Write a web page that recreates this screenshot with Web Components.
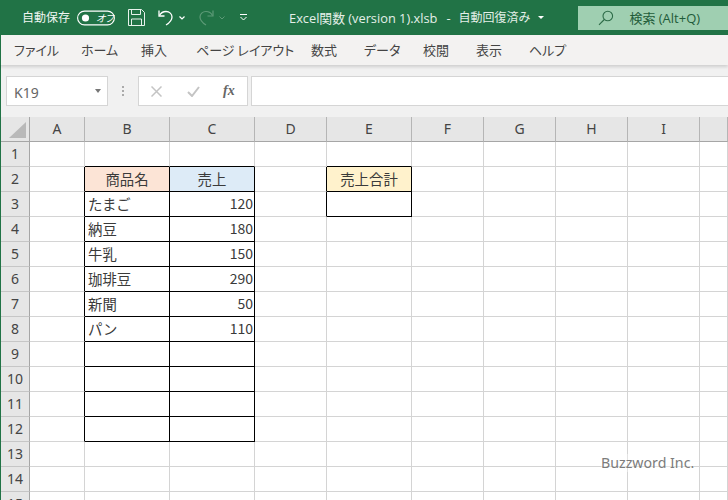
<!DOCTYPE html>
<html><head><meta charset="utf-8"><style>
html,body{margin:0;padding:0;background:#fff;overflow:hidden}
body{width:728px;height:500px;font-family:"Noto Sans CJK JP","Noto Sans",sans-serif}
</style></head><body>
<xl-app>
<xl-titlebar></xl-titlebar>
<xl-tabs></xl-tabs>
<xl-formula></xl-formula>
<xl-sheet></xl-sheet>
</xl-app>
<script>
const FONT='"Open Sans","Noto Sans CJK JP",sans-serif';
class App extends HTMLElement{constructor(){super();this.attachShadow({mode:'open'}).innerHTML=`<style>
:host{display:flex;flex-direction:column;width:728px;height:500px;overflow:hidden;position:relative;background:#fff}
.wm{position:absolute;left:601px;top:454px;font:14.2px/18px "Noto Sans",sans-serif;color:#7c7c7c;white-space:nowrap;background:rgba(255,255,255,.35)}
</style><slot></slot><div class="wm">Buzzword Inc.</div>`}}
class Title extends HTMLElement{constructor(){super();this.attachShadow({mode:'open'}).innerHTML=`<style>
:host{display:flex;align-items:center;height:35px;flex:none;background:#217346;color:#fff;font:12px/16px ${FONT};white-space:nowrap}
.a{margin-left:22px;color:#f0f6f2}
svg{display:block;flex:none}
.title{color:#e4efe8;margin-left:42px;font-size:12.8px;display:flex;align-items:center;width:296px}
.title b{font-weight:400;font-size:12px}
.search{margin-left:auto;width:153px;height:24px;background:#9fcfb1;display:flex;align-items:center;color:#1f5c3a;font-size:13px;align-self:flex-start;margin-top:6px}
.search svg{margin-left:20px}
.search span{margin-left:15px}
.sw{margin-left:7px}.sv{margin-left:13px}.un{margin-left:13px}.c1{margin-left:5px}.re{margin-left:13px}.c2{margin-left:5px}.cu{margin-left:15px}
</style>
<span class="a">自動保存</span>
<svg class="sw" width="38" height="16" viewBox="0 0 38 16"><rect x=".6" y="1.1" width="36.800" height="13.800" rx="6.900" fill="none" stroke="#fff" stroke-width="1.100"/><circle cx="8.500" cy="8" r="3.600" fill="#fff"/><text x="19" y="12" font-size="10" font-style="italic" fill="#fff" font-family="Noto Sans CJK JP" style="font-feature-settings:'palt'">オフ</text></svg>
<svg class="sv" width="17" height="17" viewBox="0 0 17 17" fill="none" stroke="#e8f2ec" stroke-width="1"><path d="M.5.5h13l3 3v13H.5z"/><path d="M3.500.5v5h9v-5M3.500 16.500v-6.500h10v6.500"/></svg>
<svg class="un" width="16" height="17" viewBox="0 0 16 17" fill="none" stroke="#fff" stroke-width="1.300"><path d="M1 1.500V7h5.500"/><path d="M1.500 6.500C3 3.500 5.500 2.500 8 2.500c3.500 0 6 2.500 6 5.500 0 3-2 5.500-6 8"/></svg>
<svg class="c1" width="6" height="4" viewBox="0 0 6 4" fill="none" stroke="#fff" stroke-width="1.200"><path d="M.5.500 3 3 5.500.5"/></svg>
<svg class="re" width="16" height="17" viewBox="0 0 16 17" fill="none" stroke="#5d9a77" stroke-width="1.200"><path d="M15 1.500V7H9.500"/><path d="M14.500 6.500C13 3.500 10.500 2.500 8 2.500 4.500 2.500 2 5 2 8c0 3 2 5.500 6 8"/></svg>
<svg class="c2" width="6" height="4" viewBox="0 0 6 4" fill="none" stroke="#5d9a77"><path d="M.5.500 3 3 5.500.5"/></svg>
<svg class="cu" width="7" height="7" viewBox="0 0 7 7" fill="none" stroke="#fff"><path d="M0 .5h7M.5 3 3.500 6 6.500 3"/></svg>
<span class="title">Excel関数 (version 1).xlsb<span style="margin-left:9px">-</span><b style="margin-left:8px">自動回復済み</b><svg style="margin-left:7px" width="6" height="3" viewBox="0 0 6 3"><path d="M0 0h6L3 3z" fill="#fff"/></svg></span>
<div class="search"><svg width="16" height="16" viewBox="0 0 16 16" fill="none" stroke="#2c6b47" stroke-width="1.100"><circle cx="9.800" cy="6" r="4.800"/><path d="M6.300 9.500 1 14.800"/></svg><span>検索 (Alt+Q)</span></div>`}}
class Tabs extends HTMLElement{constructor(){super();const t=[['ファイル',80],['ホーム',60],['挿入',55],['ページ レイアウト',115],['数式',53],['データ',59],['校閲',53],['表示',53],['ヘルプ',60]];
this.attachShadow({mode:'open'}).innerHTML=`<style>
:host{display:flex;align-items:center;height:30px;flex:none;background:#f3f2f1;color:#444;font:13px/16px "Noto Sans CJK JP",sans-serif;font-feature-settings:"palt";white-space:nowrap;box-shadow:0 2px 3px rgba(0,0,0,.14);position:relative;z-index:1;border-left:1px solid #217346;box-sizing:border-box;padding-left:13px}
span{display:block;flex:none}
</style>`+t.map(([s,w])=>`<span style="width:${w-(s=='ファイル'?13:0)}px">${s}</span>`).join('')}}
class Formula extends HTMLElement{constructor(){super();this.attachShadow({mode:'open'}).innerHTML=`<style>
:host{display:flex;height:52px;flex:none;box-sizing:border-box;padding:11px 0 0 5px;background:#f1f1f1;border-left:1px solid #217346}
.box{height:30px;box-sizing:border-box;background:#fff;border:1px solid #d5d5d5;display:flex;align-items:center}
.name{width:102px;padding-left:7px;font:14px "Noto Sans",sans-serif;color:#666;justify-content:space-between;padding-right:6px}
.name span:first-child{padding-top:2px}
.tri{width:0;height:0;border:3.500px solid transparent;border-top:4px solid #777;border-bottom:0}
.dots{width:30px;display:flex;flex-direction:column;align-items:center;justify-content:center;gap:2px;height:30px}
.dots i{width:2px;height:2px;background:#aaa}
.btns{width:110px;justify-content:flex-start}
.btns svg{display:block}
.fx{font:italic bold 14px "Liberation Serif",serif;color:#666;margin-left:23px}
.input{flex:1;margin-left:3px;border-right:0}
</style>
<div class="box name"><span>K19</span><span class="tri"></span></div>
<div class="dots"><i></i><i></i><i></i></div>
<div class="box btns">
<svg style="margin-left:12px" width="11" height="11" viewBox="0 0 11 11" stroke="#c4c4c4" stroke-width="1.500"><path d="M.5.500l10 10M10.500.500l-10 10"/></svg>
<svg style="margin-left:25px" width="13" height="11" viewBox="0 0 13 11" fill="none" stroke="#c4c4c4" stroke-width="2"><path d="M1 6l4 4 7-9"/></svg>
<span class="fx">fx</span></div>
<div class="box input"></div>`}}
class Sheet extends HTMLElement{constructor(){super();
const cw=[55,85,85,72,85,72,72,72,72,28];
const cols='ABCDEFGHIJ'.split('');
const data={B2:['商品名','h o'],C2:['売上','h b'],E2:['売上合計','h y'],B3:['たまご'],C3:['120','n'],B4:['納豆'],C4:['180','n'],B5:['牛乳'],C5:['150','n'],B6:['珈琲豆'],C6:['290','n'],B7:['新聞'],C7:['50','n'],B8:['パン'],C8:['110','n']};
const inT=(c,r)=>((c==1||c==2)&&r>=2&&r<=12)||(c==4&&(r==2||r==3));
let h=`<style>
:host{display:grid;flex:none;grid-template-columns:29px ${cw.map(x=>x+'px').join(' ')};grid-auto-rows:25px;grid-template-rows:25px;font:14.400px/23px "Noto Sans CJK JP",sans-serif;color:#3a3a3a;background:#fff;border-left:1px solid #217346}
.c{box-sizing:border-box;border-right:1px solid #d4d4d4;border-bottom:1px solid #d4d4d4;overflow:hidden;white-space:nowrap;padding:0 1px 0 3px;min-width:0}
.n{text-align:right;font-size:14px;padding-right:1px}
.h{text-align:center;padding:0}
.o{background:#fce4d6}.b{background:#ddebf7}.y{background:#fff2cc}
.kr{border-right-color:#000}.kb{border-bottom-color:#000}
.ch{box-sizing:border-box;background:#e6e6e6;border-right:1px solid #b5b5b5;border-bottom:1px solid #a6a6a6;text-align:center;font:14px/23px "Noto Sans",sans-serif;color:#444}
.rh{box-sizing:border-box;background:#e6e6e6;border-right:1px solid #a6a6a6;border-bottom:1px solid #c6c6c6;text-align:center;font:14px/23px "Noto Sans",sans-serif;color:#444}
.corner{box-sizing:border-box;background:#e6e6e6;border-right:1px solid #a6a6a6;border-bottom:1px solid #a6a6a6;display:flex;align-items:flex-end;justify-content:flex-end}
.corner svg{display:block;margin:0 3px 3px 0}
</style>`;
h+=`<div class="corner"><svg width="17" height="16" viewBox="0 0 17 16"><path d="M17 0v16H0z" fill="#b9b9b9"/></svg></div>`;
cols.forEach(c=>h+=`<div class="ch">${c=='J'?'':c}</div>`);
for(let r=1;r<=15;r++){h+=`<div class="rh">${r}</div>`;
cols.forEach((c,i)=>{let k='';const me=inT(i,r);if(me||inT(i+1,r))k+=' kr';if(me||inT(i,r+1))k+=' kb';
const d=data[c+r];h+=`<div class="c${k} ${d&&d[1]||''}">${d?d[0]:''}</div>`})}
this.attachShadow({mode:'open'}).innerHTML=h}}
customElements.define('xl-app',App);customElements.define('xl-titlebar',Title);customElements.define('xl-tabs',Tabs);customElements.define('xl-formula',Formula);customElements.define('xl-sheet',Sheet);
</script></body></html>
